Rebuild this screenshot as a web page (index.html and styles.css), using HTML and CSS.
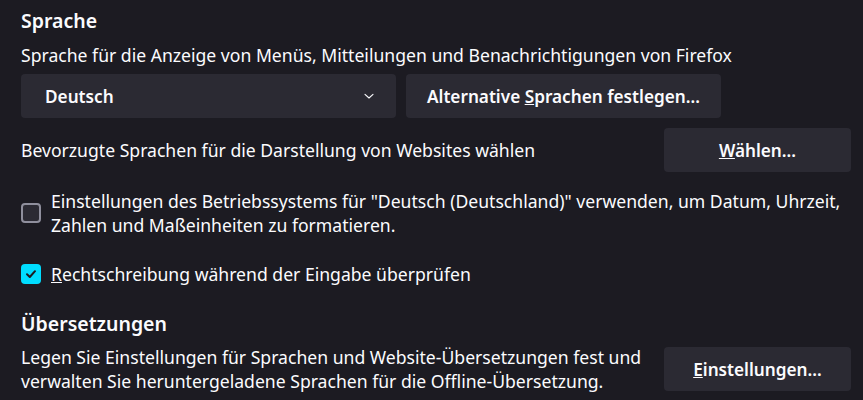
FILE: index.html
```html
<!DOCTYPE html>
<html lang="de">
	<head>
		<meta charset="utf-8">
		<title>Sprache</title>
		<link rel="stylesheet" href="styles.css">
	</head>
	<body>
		<div class="pane">

			<h2 class="heading">Sprache</h2>
			<p class="desc">Sprache für die Anzeige von Menüs, Mitteilungen und Benachrichtigungen von Firefox</p>

			<div class="row">
				<div class="select">
					<span>Deutsch</span>
					<svg class="chevron" width="12" height="12" viewBox="0 0 12 12">
						<path d="M2 4.3 L6 8 L10 4.3" fill="none" stroke="#fbfbfe" stroke-width="1.1" stroke-linecap="round" stroke-linejoin="round"/>
					</svg>
				</div>
				<button class="btn btn-alt">Alternative <u>S</u>prachen festlegen…</button>
			</div>

			<div class="row row-split">
				<span>Bevorzugte Sprachen für die Darstellung von Websites wählen</span>
				<button class="btn btn-side"><u>W</u>ählen…</button>
			</div>

			<label class="check">
				<span class="box"></span>
				<span class="check-text">Einstellungen des Betriebssystems für "Deutsch (Deutschland)" verwenden, um Datum, Uhrzeit, Zahlen und Maßeinheiten zu formatieren.</span>
			</label>

			<label class="check check-on">
				<span class="box">
					<svg width="14" height="14" viewBox="0 0 14 14">
						<path d="M3 7.3 L5.8 10 L11 4.2" fill="none" stroke="#1c1b22" stroke-width="2" stroke-linecap="round" stroke-linejoin="round"/>
					</svg>
				</span>
				<span class="check-text"><u>R</u>echtschreibung während der Eingabe überprüfen</span>
			</label>

			<h2 class="heading heading-2">Übersetzungen</h2>
			<div class="row row-split row-top">
				<p class="desc desc-wrap">Legen Sie Einstellungen für Sprachen und Website-Übersetzungen fest und verwalten Sie heruntergeladene Sprachen für die Offline-Übersetzung.</p>
				<button class="btn btn-side"><u>E</u>instellungen…</button>
			</div>

		</div>
	</body>
</html>
```
FILE: styles.css
```css
body {
	margin: 0;
	background-color: #1c1b22;
	color: #fbfbfe;
	font-family: "Noto Sans", "Open Sans", sans-serif;
	font-size: 17.6px;
}

.pane {
	padding: 8px 12px 0 21px;
}

.heading {
	margin: 0;
	font-size: 19.5px;
	font-weight: 600;
	line-height: 26px;
}

.heading-2 {
	margin-top: 25px;
}

.desc {
	margin: 9px 0 0;
	line-height: 24px;
}

.row {
	display: flex;
	gap: 10px;
	margin-top: 7px;
}

.row-split {
	justify-content: space-between;
	align-items: center;
	margin-top: 10px;
}

.row-top {
	margin-top: 8px;
}

.desc-wrap {
	width: 630px;
	margin: 0;
}

.select {
	display: flex;
	align-items: center;
	justify-content: space-between;
	box-sizing: border-box;
	width: 375px;
	height: 44px;
	padding: 0 21px 0 24px;
	background-color: #2b2a33;
	border-radius: 4px;
	font-size: 17.2px;
	font-weight: 600;
}

.btn {
	box-sizing: border-box;
	height: 44px;
	padding: 0 10px;
	border: none;
	border-radius: 4px;
	background-color: #2b2a33;
	color: #fbfbfe;
	font-family: inherit;
	font-size: 17.2px;
	font-weight: 600;
}

.btn-alt {
	width: 315px;
}

.btn-side {
	width: 187px;
	flex-shrink: 0;
}

.check {
	display: flex;
	gap: 10px;
	align-items: center;
	margin-top: 17px;
	line-height: 24px;
}

.check + .check {
	margin-top: 25px;
}

.box {
	flex-shrink: 0;
	display: flex;
	align-items: center;
	justify-content: center;
	box-sizing: border-box;
	width: 20px;
	height: 20px;
	border: 2px solid #8f8f9d;
	border-radius: 4px;
	background-color: #2b2a33;
}

.check-on .box {
	border: none;
	background-color: #00ddff;
}
```
